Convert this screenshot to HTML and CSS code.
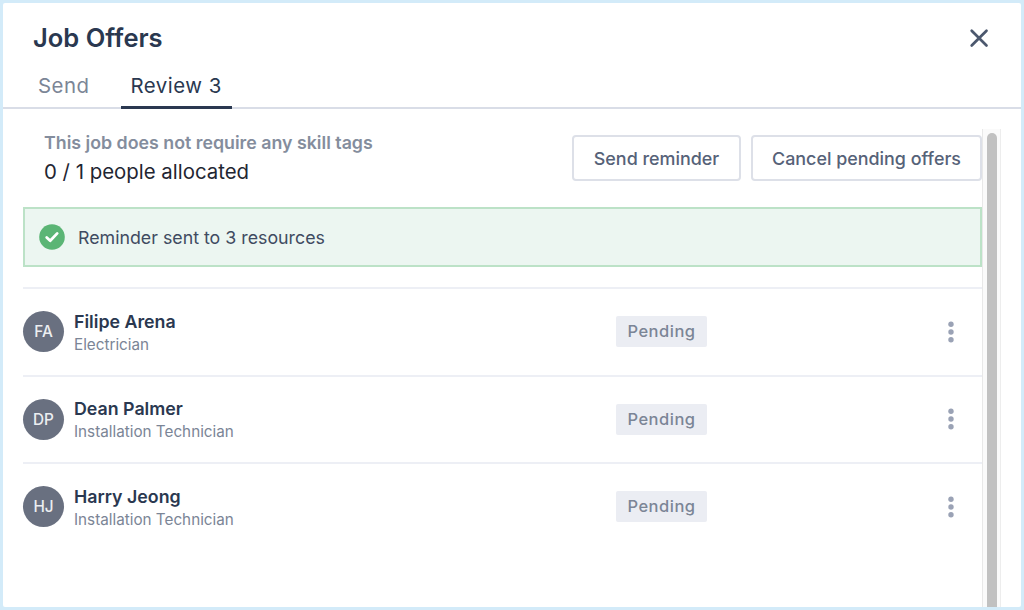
FILE: index.html
```html
<!DOCTYPE html>
<html lang="en">
<head>
    <meta charset="UTF-8">
    <meta name="viewport" content="width=device-width, initial-scale=1.0">
    <title>Job Offers</title>
    <link rel="stylesheet" href="styles.css">
</head>
<body>

<div class="modal">
    <div class="header">
        <div class="title-bar">
            <h2>Job Offers</h2>
            <button class="close" aria-label="Close">
                <svg width="20" height="20" viewBox="0 0 20 20"><path d="M2.7 2.7L17.5 17.5M17.5 2.7L2.7 17.5" /></svg>
            </button>
        </div>
        <div class="tabs">
            <a class="tab">Send</a>
            <a class="tab active">Review 3</a>
        </div>
    </div>

    <div class="body">
        <div class="content">
            <div class="summary">
                <div class="summary-text">
                    <p class="skills">This job does not require any skill tags</p>
                    <p class="allocated">0 / 1 people allocated</p>
                </div>
                <button class="btn btn-remind">Send reminder</button>
                <button class="btn btn-cancel">Cancel pending offers</button>
            </div>

            <div class="alert">
                <svg class="check" width="26" height="26" viewBox="0 0 26 26">
                    <circle cx="13" cy="13" r="12.8" />
                    <path d="M7.7 13.4L11.2 16.7L18.2 9.4" />
                </svg>
                <span>Reminder sent to 3 resources</span>
            </div>

            <div class="list">
                <div class="row">
                    <div class="avatar">FA</div>
                    <div class="person">
                        <div class="name">Filipe Arena</div>
                        <div class="role">Electrician</div>
                    </div>
                    <div class="status">Pending</div>
                    <svg class="menu" width="6" height="22" viewBox="0 0 6 22"><circle cx="3" cy="3.3" r="2.7" /><circle cx="3" cy="11" r="2.7" /><circle cx="3" cy="18.7" r="2.7" /></svg>
                </div>
                <div class="row">
                    <div class="avatar">DP</div>
                    <div class="person">
                        <div class="name">Dean Palmer</div>
                        <div class="role">Installation Technician</div>
                    </div>
                    <div class="status">Pending</div>
                    <svg class="menu" width="6" height="22" viewBox="0 0 6 22"><circle cx="3" cy="3.3" r="2.7" /><circle cx="3" cy="11" r="2.7" /><circle cx="3" cy="18.7" r="2.7" /></svg>
                </div>
                <div class="row">
                    <div class="avatar">HJ</div>
                    <div class="person">
                        <div class="name">Harry Jeong</div>
                        <div class="role">Installation Technician</div>
                    </div>
                    <div class="status">Pending</div>
                    <svg class="menu" width="6" height="22" viewBox="0 0 6 22"><circle cx="3" cy="3.3" r="2.7" /><circle cx="3" cy="11" r="2.7" /><circle cx="3" cy="18.7" r="2.7" /></svg>
                </div>
            </div>
        </div>
        <div class="scrollbar"><div class="thumb"></div></div>
    </div>
</div>

</body>
</html>
```
FILE: styles.css
```css
* {
    box-sizing: border-box;
}

body {
    margin: 0;
    height: 100vh;
    padding: 3px;
    background: #d3ebf9;
    font-family: Inter, "Liberation Sans", sans-serif;
    color: #2a3850;
    overflow: hidden;
}

h2, p {
    margin: 0;
}

.modal {
    display: flex;
    flex-direction: column;
    height: 100%;
    background: #fff;
    border-radius: 2px;
    overflow: hidden;
}

.header {
    height: 106px;
    border-bottom: 2px solid #d9dde7;
}

.title-bar {
    display: flex;
    justify-content: space-between;
    align-items: center;
    height: 70px;
    padding: 0 32px 0 30px;
}

.title-bar h2 {
    font-size: 25.5px;
    font-weight: 600;
    line-height: 30px;
}

.close {
    display: flex;
    padding: 0;
    border: none;
    background: none;
}

.close path {
    fill: none;
    stroke: #4c586e;
    stroke-width: 2.7;
    stroke-linecap: round;
}

.tabs {
    display: flex;
    height: 36px;
    padding-left: 26px;
    gap: 21px;
}

.tab {
    padding: 0 10px;
    font-size: 20.4px;
    line-height: 26px;
    letter-spacing: 0.5px;
    color: #7b8596;
    border-bottom: 3px solid transparent;
}

.tab.active {
    color: #2a3850;
    border-bottom-color: #2a3850;
}

.tab:first-child {
    margin-left: -1px;
}

.body {
    display: flex;
    flex: 1;
    padding: 20px 20px 0 20px;
}

.content {
    flex: 1;
}

.summary {
    display: flex;
    height: 46px;
    margin-top: 6px;
}

.summary-text {
    flex: 1;
    padding-left: 21px;
}

.skills {
    margin-top: -4px;
    font-size: 17.8px;
    font-weight: 600;
    line-height: 24px;
    color: #848d9d;
}

.allocated {
    margin-top: 4px;
    font-size: 20.4px;
    line-height: 26px;
    color: #1f2632;
}

.btn {
    padding: 0;
    background: #fff;
    border: 2px solid #dde0e8;
    border-radius: 4px;
    font-family: inherit;
    font-size: 17.9px;
    font-weight: 500;
    color: #566278;
}

.btn-remind {
    width: 169px;
}

.btn-cancel {
    width: 231px;
    margin-left: 10px;
}

.alert {
    display: flex;
    align-items: center;
    gap: 13px;
    height: 60px;
    margin: 26px 0 20px;
    padding-left: 14px;
    background: #ecf6f1;
    border: 2px solid #bce2c7;
    font-size: 17.8px;
    color: #3f4b61;
}

.check circle {
    fill: #5bb575;
}

.check path {
    fill: none;
    stroke: #fff;
    stroke-width: 2.8;
    stroke-linecap: round;
    stroke-linejoin: round;
}

.row {
    display: flex;
    align-items: center;
    height: 87.6px;
    border-top: 2px solid #edeff5;
}

.avatar {
    width: 41px;
    height: 41px;
    border-radius: 50%;
    background: #697080;
    color: #eceef1;
    font-size: 15.3px;
    font-weight: 500;
    line-height: 41px;
    text-align: center;
}

.person {
    width: 542px;
    margin-left: 10px;
    padding-top: 3px;
}

.name {
    font-size: 17.8px;
    font-weight: 600;
    line-height: 22px;
}

.role {
    font-size: 15.25px;
    line-height: 23px;
    color: #7b8596;
}

.status {
    width: 91px;
    height: 31px;
    border-radius: 2px;
    background: #ebedf3;
    color: #7b8596;
    font-size: 16.5px;
    font-weight: 500;
    line-height: 30px;
    letter-spacing: 0.5px;
    text-align: center;
}

.menu {
    margin-left: auto;
    margin-right: 28px;
    fill: #9aa2b5;
}

.scrollbar {
    width: 19px;
    padding: 4px 3px 0 4px;
    background: #fafafa;
    border-left: 1px solid #e8e8e8;
    border-right: 1px solid #ededed;
}

.thumb {
    height: 500px;
    border-radius: 5px;
    background: #c1c1c1;
}
```
